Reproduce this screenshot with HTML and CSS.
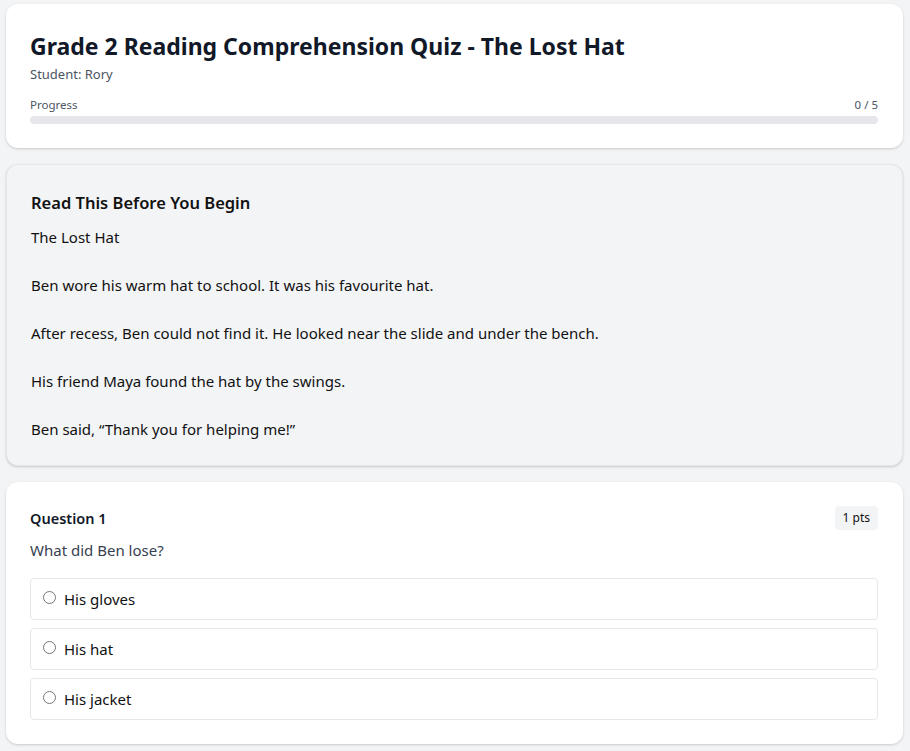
FILE: index.html
```html
<!DOCTYPE html>
<html lang="en">
<head>
<meta charset="utf-8">
<title>Grade 2 Reading Comprehension Quiz - The Lost Hat</title>
<link rel="stylesheet" href="styles.css">
</head>
<body>
<main class="page">
  <section class="card header-card">
    <h1 class="title">Grade 2 Reading Comprehension Quiz - The Lost Hat</h1>
    <div class="student">Student: Rory</div>
    <div class="progress-row">
      <span>Progress</span>
      <span>0 / 5</span>
    </div>
    <div class="progress-track"><div class="progress-fill" style="width:0%"></div></div>
  </section>

  <section class="card passage-card">
    <h2 class="passage-title">Read This Before You Begin</h2>
    <div class="passage">The Lost Hat

Ben wore his warm hat to school. It was his favourite hat.

After recess, Ben could not find it. He looked near the slide and under the bench.

His friend Maya found the hat by the swings.

Ben said, “Thank you for helping me!”</div>
  </section>

  <section class="card question-card">
    <div class="q-head">
      <h3 class="q-label">Question 1</h3>
      <span class="pts">1 pts</span>
    </div>
    <p class="q-text">What did Ben lose?</p>
    <div class="options">
      <label class="option"><input type="radio" name="q1"><span>His gloves</span></label>
      <label class="option"><input type="radio" name="q1"><span>His hat</span></label>
      <label class="option"><input type="radio" name="q1"><span>His jacket</span></label>
    </div>
  </section>
</main>
</body>
</html>
```

FILE: styles.css
```css
* { box-sizing: border-box; }
html, body { margin: 0; padding: 0; }
body {
  background: #f3f4f6;
  font-family: "Noto Sans", "Open Sans", sans-serif;
  color: #111827;
}
.page {
  display: flex;
  flex-direction: column;
  gap: 16px;
  padding: 4px 7px 8px 6px;
}
.card {
  background: #ffffff;
  border-radius: 12px;
  padding: 24px 25px 24px 24px;
  box-shadow: 0 1px 3px rgba(0,0,0,0.12), 0 1px 2px rgba(0,0,0,0.06);
}
.title {
  margin: 0;
  font-size: 23px;
  line-height: 36px;
  font-weight: 700;
  color: #111827;
}
.student {
  font-size: 13px;
  line-height: 20px;
  color: #4b5563;
}
.progress-row {
  display: flex;
  justify-content: space-between;
  margin-top: 13px;
  font-size: 11.5px;
  line-height: 16px;
  color: #4b5563;
}
.progress-track {
  margin-top: 3px;
  height: 8px;
  border-radius: 4px;
  background: #e5e7eb;
  overflow: hidden;
}
.progress-fill { height: 100%; background: #2563eb; }

.passage-card {
  background: #f3f4f6;
  border: 1px solid #e5e7eb;
  padding: 24px 24px 24px 24px;
}
.passage-title {
  margin: 0 0 8px;
  font-size: 16.5px;
  line-height: 28px;
  font-weight: 600;
  color: #111;
}
.passage {
  white-space: pre-line;
  font-size: 15px;
  line-height: 24px;
  color: #111;
}

.q-head {
  display: flex;
  justify-content: space-between;
  align-items: center;
}
.q-label {
  margin: 0;
  font-size: 14.5px;
  line-height: 24px;
  font-weight: 600;
  color: #111827;
}
.pts {
  background: #f3f4f6;
  border-radius: 4px;
  padding: 2px 8px;
  font-size: 12px;
  line-height: 20px;
  color: #111;
}
.q-text {
  margin: 8px 0 16px;
  font-size: 15px;
  line-height: 24px;
  color: #374151;
}
.options {
  display: flex;
  flex-direction: column;
  gap: 8px;
}
.option {
  display: flex;
  align-items: center;
  border: 1px solid #e5e7eb;
  border-radius: 4px;
  padding: 8px 12px;
  font-size: 15px;
  line-height: 24px;
  color: #111;
  background: #fff;
}
.option input {
  margin: 0 8px 4px 0;
  width: 13px;
  height: 13px;
}
```
